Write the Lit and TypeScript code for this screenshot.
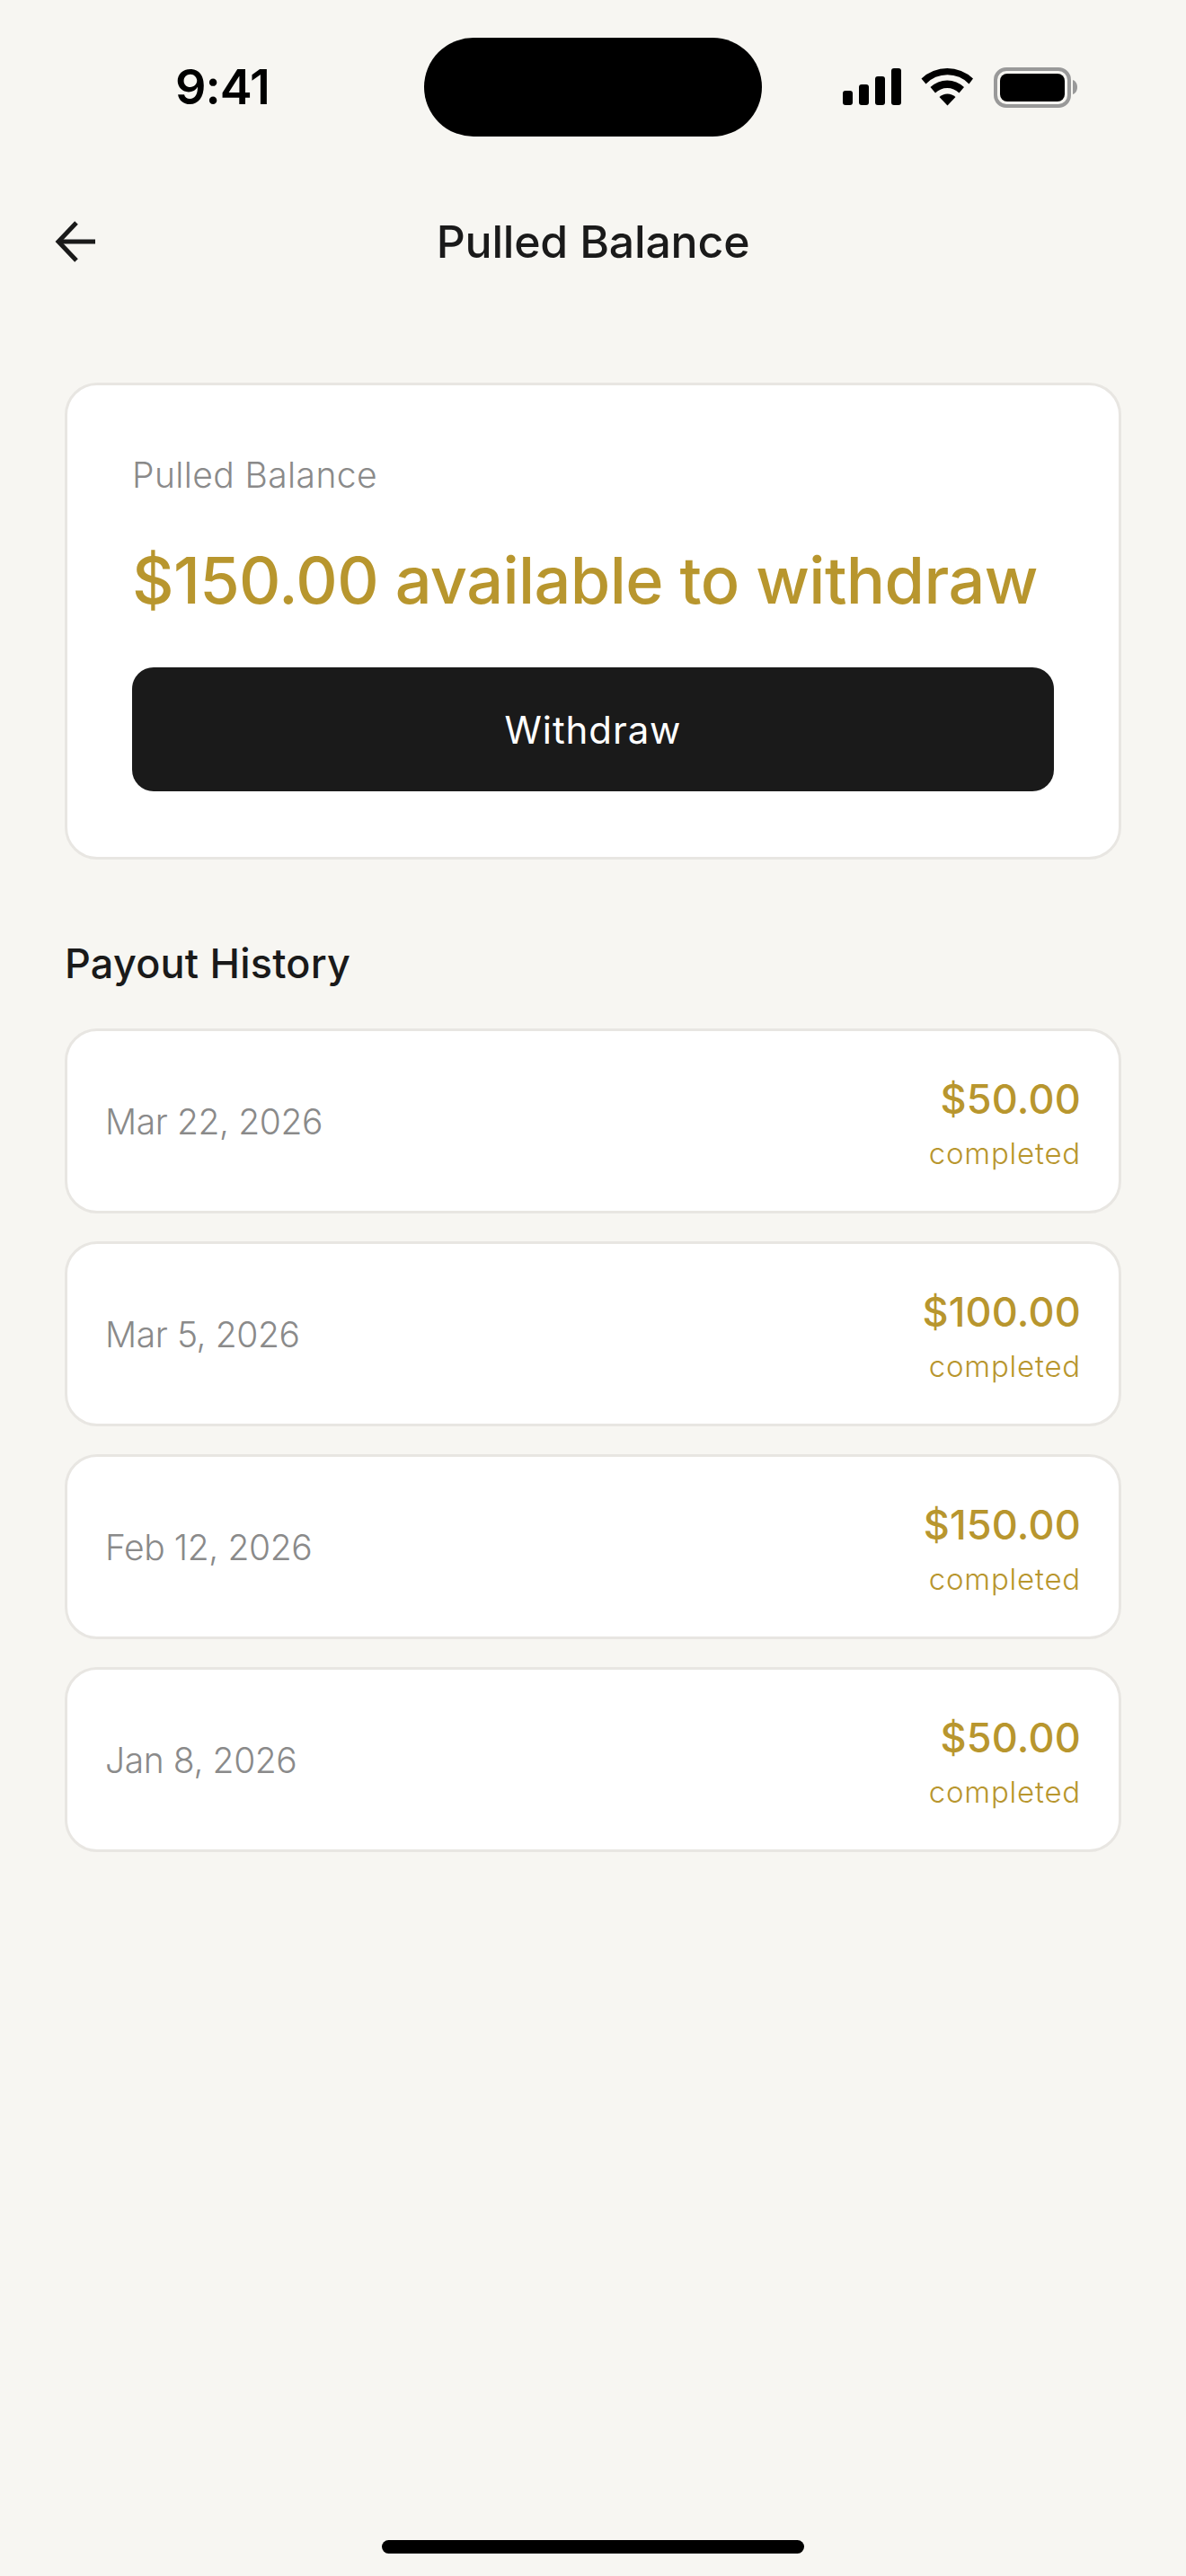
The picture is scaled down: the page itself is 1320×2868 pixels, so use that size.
import { LitElement, html, css } from "lit";
import { customElement } from "lit/decorators.js";

const rows = [
  { date: "Mar 22, 2026", amount: "$50.00" },
  { date: "Mar 5, 2026", amount: "$100.00" },
  { date: "Feb 12, 2026", amount: "$150.00" },
  { date: "Jan 8, 2026", amount: "$50.00" },
];

@customElement("app-root")
export class AppRoot extends LitElement {
  static styles = css`
    :host {
      display: block;
      width: 1320px;
      height: 2868px;
      background: #f7f6f2;
      font-family: Inter, "Liberation Sans", sans-serif;
      color: #1a1a1a;
      overflow: hidden;
    }
    .page {
      display: flex;
      flex-direction: column;
      height: 2868px;
      box-sizing: border-box;
    }
    .status {
      height: 194px;
      flex: none;
      display: grid;
      grid-template-columns: 472px 376px 1fr;
      box-sizing: border-box;
      padding-top: 42px;
    }
    .time {
      font-size: 54px;
      font-weight: 600;
      line-height: 110px;
      height: 110px;
      padding-left: 195px;
      letter-spacing: -1px;
      color: #000;
    }
    .island {
      background: #000;
      height: 110px;
      border-radius: 55px;
    }
    .sys {
      display: flex;
      align-items: flex-start;
      padding: 33px 0 0 90px;
    }
    .sys svg {
      display: block;
    }
    .nav {
      height: 152px;
      flex: none;
      display: grid;
      grid-template-columns: 1fr auto 1fr;
      align-items: center;
      margin-top: -1px;
    }
    .back {
      padding-left: 60px;
      display: flex;
    }
    .nav h1 {
      margin: 0;
      font-size: 50px;
      font-weight: 450;
      line-height: 60px;
      letter-spacing: -0.2px;
    }
    .content {
      padding: 81px 72px 0;
      display: flex;
      flex-direction: column;
    }
    .card {
      background: #fff;
      border: 3px solid #e8e6e2;
      border-radius: 36px;
      box-sizing: border-box;
    }
    .balance {
      height: 531px;
      padding: 72px;
    }
    .label {
      font-size: 39px;
      font-weight: 300;
      line-height: 48px;
      color: #8a8a8a;
      letter-spacing: 0.4px;
      padding-top: 4px;
    }
    .big {
      font-size: 72px;
      font-weight: 450;
      line-height: 90px;
      color: #b8962e;
      margin-top: 48px;
      letter-spacing: -0.6px;
      white-space: nowrap;
    }
    .btn {
      margin-top: 52px;
      height: 138px;
      border-radius: 24px;
      background: #1a1a1a;
      color: #fff;
      font-size: 42px;
      font-weight: 400;
      letter-spacing: 0.9px;
      display: flex;
      align-items: center;
      justify-content: center;
    }
    h2 {
      margin: 0;
      font-size: 45px;
      font-weight: 450;
      line-height: 54px;
      letter-spacing: 0.2px;
      padding: 89px 0 0;
    }
    .list {
      display: flex;
      flex-direction: column;
      gap: 31px;
      margin-top: 45px;
    }
    .row {
      height: 206px;
      display: flex;
      align-items: center;
      justify-content: space-between;
      padding: 0 42px;
    }
    .date {
      font-size: 39px;
      font-weight: 300;
      color: #8a8a8a;
      letter-spacing: -0.4px;
    }
    .right {
      display: flex;
      flex-direction: column;
      align-items: flex-end;
      padding-top: 5px;
    }
    .amt {
      font-size: 45px;
      font-weight: 450;
      line-height: 56px;
      letter-spacing: 0.2px;
      color: #b8962e;
    }
    .state {
      font-size: 33px;
      font-weight: 300;
      line-height: 44px;
      color: #b8962e;
      letter-spacing: 0.8px;
      margin-top: 10px;
    }
    .spacer {
      flex: 1;
    }
    .home {
      flex: none;
      width: 470px;
      height: 15px;
      border-radius: 8px;
      background: #000;
      align-self: center;
      margin-bottom: 25px;
    }
  `;

  render() {
    return html`<div class="page">
      <div class="status">
        <div class="time">9:41</div>
        <div class="island"></div>
        <div class="sys">
          <svg width="270" height="46" viewBox="0 0 270 46">
            <g fill="#000">
              <rect x="0" y="26" width="11" height="16" rx="3" />
              <rect x="18" y="19" width="11" height="23" rx="3" />
              <rect x="36" y="10" width="11" height="32" rx="3" />
              <rect x="54" y="1" width="11" height="41" rx="3" />
              <path d="M87.5 12.5 A42 42 0 0 1 145 12.5 L 140.5 18.5 A33 33 0 0 0 92.5 18.5 Z" />
              <path d="M97.5 22 A27 27 0 0 1 135 22 L 129.5 28.5 A19 19 0 0 0 103 28.5 Z" />
              <path d="M107.5 33 A13 13 0 0 1 125.5 33 L 116.5 42.5 Z" />
            </g>
            <rect x="170" y="2" width="82" height="41" rx="12" fill="none" stroke="#999" stroke-width="4" />
            <rect x="175" y="7" width="72" height="31" rx="8" fill="#000" />
            <path d="M256 14 C 259 15 261 18 261 22 C 261 26 259 29 256 30 Z" fill="#999" />
          </svg>
        </div>
      </div>
      <div class="nav">
        <div class="back">
          <svg width="48" height="48" viewBox="0 0 48 48" fill="none" stroke="#1a1a1a" stroke-width="5">
            <path d="M46 24 H5" />
            <path d="M25 3 L5 24 L25 45" />
          </svg>
        </div>
        <h1>Pulled Balance</h1>
        <div></div>
      </div>
      <div class="content">
        <div class="card balance">
          <div class="label">Pulled Balance</div>
          <div class="big">$150.00 available to withdraw</div>
          <div class="btn">Withdraw</div>
        </div>
        <h2>Payout History</h2>
        <div class="list">
          ${rows.map(
            (r) => html`<div class="card row">
              <div class="date">${r.date}</div>
              <div class="right">
                <div class="amt">${r.amount}</div>
                <div class="state">completed</div>
              </div>
            </div>`
          )}
        </div>
      </div>
      <div class="spacer"></div>
      <div class="home"></div>
    </div>`;
  }
}
